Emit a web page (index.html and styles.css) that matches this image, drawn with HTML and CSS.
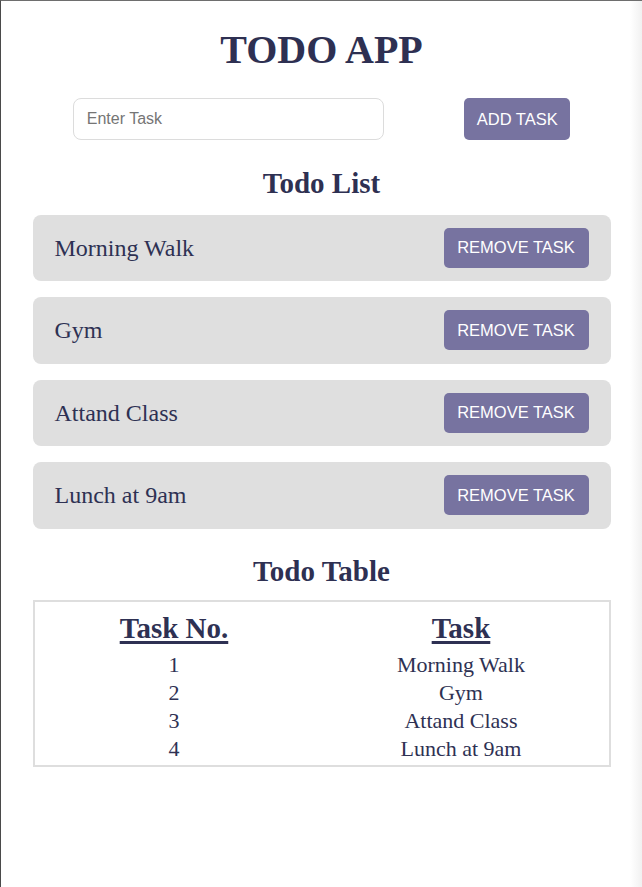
FILE: index.html
```html
<!DOCTYPE html>
<html lang="en">
<head>
<meta charset="utf-8">
<title>Todo App</title>
<link rel="stylesheet" href="styles.css">
</head>
<body>
  <div class="app">
    <h1 class="title">TODO APP</h1>
    <div class="add-row">
      <input class="task-input" type="text" placeholder="Enter Task">
      <button class="btn btn-add">ADD TASK</button>
    </div>

    <h2 class="section-title section-list">Todo List</h2>
    <ul class="todo-list">
      <li class="todo-item"><span class="todo-text">Morning Walk</span><button class="btn btn-remove">REMOVE TASK</button></li>
      <li class="todo-item"><span class="todo-text">Gym</span><button class="btn btn-remove">REMOVE TASK</button></li>
      <li class="todo-item"><span class="todo-text">Attand Class</span><button class="btn btn-remove">REMOVE TASK</button></li>
      <li class="todo-item"><span class="todo-text">Lunch at 9am</span><button class="btn btn-remove">REMOVE TASK</button></li>
    </ul>

    <h2 class="section-title section-table">Todo Table</h2>
    <div class="table-box">
      <table class="todo-table">
        <colgroup>
          <col class="col-no">
          <col class="col-task">
        </colgroup>
        <thead>
          <tr><th>Task No.</th><th>Task</th></tr>
        </thead>
        <tbody>
          <tr><td>1</td><td>Morning Walk</td></tr>
          <tr><td>2</td><td>Gym</td></tr>
          <tr><td>3</td><td>Attand Class</td></tr>
          <tr><td>4</td><td>Lunch at 9am</td></tr>
        </tbody>
      </table>
    </div>
  </div>
</body>
</html>
```

FILE: styles.css
```css
* {
  box-sizing: border-box;
}

html {
  background: #ffffff;
}

body {
  margin: 0;
  min-height: 887px;
  border-top: 1px solid #6e6e6e;
  border-left: 1px solid #4a4a4a;
  background: linear-gradient(to right, #ffffff calc(100% - 12px), #f1f1f1 100%);
  font-family: "Liberation Serif", "Times New Roman", serif;
  color: #2e3153;
}

.app {
  width: 578px;
  margin: 0 auto;
  padding-top: 26px;
}

.title {
  margin: 0 0 25px;
  font-size: 40px;
  line-height: 46px;
  font-weight: bold;
  text-align: center;
  color: #2e3052;
}

.add-row {
  display: flex;
  justify-content: space-around;
  align-items: center;
}

.task-input {
  width: 311px;
  height: 42px;
  border: 1px solid #dcdcdc;
  border-radius: 8px;
  padding: 0 13px;
  font-family: "Liberation Sans", Arial, sans-serif;
  font-size: 16px;
  color: #333;
  outline: none;
}

.task-input::placeholder {
  color: #757575;
}

.btn {
  border: none;
  border-radius: 5px;
  background: #7773a0;
  color: #ffffff;
  font-family: "Liberation Sans", Arial, sans-serif;
  font-size: 16.5px;
  cursor: pointer;
}

.btn-add {
  width: 106px;
  height: 42px;
  padding: 0;
}

.section-title {
  margin: 26px 0 14.5px;
  font-size: 29px;
  line-height: 34px;
  font-weight: bold;
  text-align: center;
  color: #2e3052;
}

.section-table {
  margin-top: 25px;
  margin-bottom: 12px;
}

.todo-list {
  list-style: none;
  margin: 0;
  padding: 0;
  display: flex;
  flex-direction: column;
  gap: 16px;
}

.todo-item {
  display: flex;
  justify-content: space-between;
  align-items: center;
  padding: 13.25px 22px;
  background: #dfdfdf;
  border-radius: 8px;
}

.todo-text {
  font-size: 24px;
  line-height: 28px;
}

.btn-remove {
  width: 145px;
  height: 40px;
  padding: 0;
}

.table-box {
  border: 2px solid #dedede;
  padding-bottom: 2px;
}

.todo-table {
  width: 100%;
  border-collapse: collapse;
  border-spacing: 0;
}

.col-no {
  width: 48.6%;
}

.col-task {
  width: 51.4%;
}

.todo-table th {
  padding: 9px 0 6px;
  font-size: 29px;
  line-height: 34px;
  font-weight: bold;
  text-decoration: underline;
  text-decoration-thickness: 3px;
  text-underline-offset: 3px;
  text-align: center;
}

.todo-table td {
  padding: 0;
  font-size: 22px;
  line-height: 28px;
  text-align: center;
}
```
